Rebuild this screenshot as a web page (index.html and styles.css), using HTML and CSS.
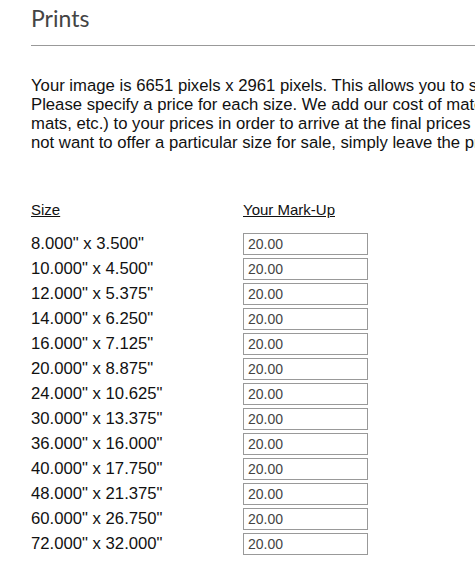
FILE: index.html
```html
<!DOCTYPE html>
<html lang="en">
<head>
<meta charset="UTF-8">
<title>Prints</title>
<link rel="stylesheet" href="styles.css">
</head>

<body>

<h1>Prints</h1>

<p class="intro">Your image is 6651 pixels x 2961 pixels. This allows you to sell prints up to the sizes listed below.
  <br>Please specify a price for each size. We add our cost of materials (paper, printing, shipping, frames,
  <br>mats, etc.) to your prices in order to arrive at the final prices shown to your customers. If you do
  <br>not want to offer a particular size for sale, simply leave the price field blank.</p>

<table class="sizes">
  <tr>
    <th>Size</th>
    <th>Your Mark-Up</th>
  </tr>
  <tr><td>8.000" x 3.500"</td><td><input type="text" value="20.00"></td></tr>
  <tr><td>10.000" x 4.500"</td><td><input type="text" value="20.00"></td></tr>
  <tr><td>12.000" x 5.375"</td><td><input type="text" value="20.00"></td></tr>
  <tr><td>14.000" x 6.250"</td><td><input type="text" value="20.00"></td></tr>
  <tr><td>16.000" x 7.125"</td><td><input type="text" value="20.00"></td></tr>
  <tr><td>20.000" x 8.875"</td><td><input type="text" value="20.00"></td></tr>
  <tr><td>24.000" x 10.625"</td><td><input type="text" value="20.00"></td></tr>
  <tr><td>30.000" x 13.375"</td><td><input type="text" value="20.00"></td></tr>
  <tr><td>36.000" x 16.000"</td><td><input type="text" value="20.00"></td></tr>
  <tr><td>40.000" x 17.750"</td><td><input type="text" value="20.00"></td></tr>
  <tr><td>48.000" x 21.375"</td><td><input type="text" value="20.00"></td></tr>
  <tr><td>60.000" x 26.750"</td><td><input type="text" value="20.00"></td></tr>
  <tr><td>72.000" x 32.000"</td><td><input type="text" value="20.00"></td></tr>
</table>

</body>
</html>
```

FILE: styles.css
```css
html {
  overflow-x: hidden;
}
body {
  font-family: "Liberation Sans", Arial, sans-serif;
  color: #111;
  background-color: #fff;
  margin: 0;
  padding: 0 0 0 31px;
  width: 760px;
}
h1 {
  font-family: Lato, "Open Sans", sans-serif;
  font-weight: 400;
  font-size: 23px;
  color: #444;
  margin: 0;
  padding: 4px 0 13px;
  border-bottom: 1px solid #999;
}
p.intro {
  font-size: 16.7px;
  line-height: 19px;
  margin: 30px 0 0;
  white-space: nowrap;
}
table.sizes {
  margin-top: 49px;
  border-spacing: 0;
  border-collapse: collapse;
}
th {
  font-size: 15px;
  font-weight: 400;
  text-align: left;
  text-decoration: underline;
  padding: 0 0 15px;
}
th:first-child {
  width: 212px;
}
td {
  font-size: 16.7px;
  padding: 0 0 3px;
  height: 22px;
}
td input {
  font-family: "Liberation Sans", Arial, sans-serif;
  font-size: 14px;
  color: #444;
  width: 125px;
  height: 22px;
  box-sizing: border-box;
  border: 1px solid #999;
  padding: 1px 4px;
  margin: 0;
}
```
